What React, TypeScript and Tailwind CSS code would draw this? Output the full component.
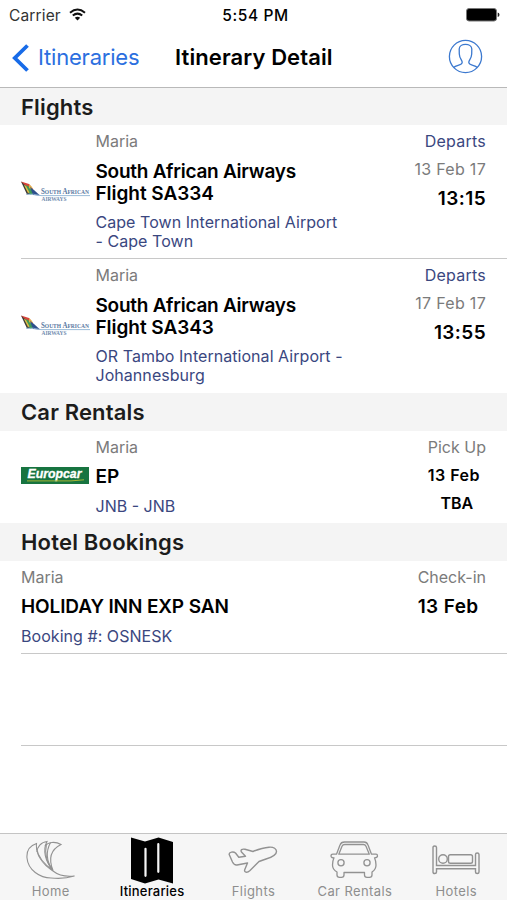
import React from 'react';

interface Flight {
  passenger: string;
  number: string;
  route: string[];
  date: string;
  time: string;
}

const flights: Flight[] = [
  {
    passenger: 'Maria',
    number: 'Flight SA334',
    route: ['Cape Town International Airport', '- Cape Town'],
    date: '13 Feb 17',
    time: '13:15',
  },
  {
    passenger: 'Maria',
    number: 'Flight SA343',
    route: ['OR Tambo International Airport -', 'Johannesburg'],
    date: '17 Feb 17',
    time: '13:55',
  },
];

const SouthAfricanLogo = () => (
  <svg width="69" height="22" viewBox="0 0 69 22">
    <path d="M0 0.5 L8 3 L12 8 L6 9 Z" fill="#d9443a" />
    <path d="M0 0.5 L6 13.5 L10 13 L5 5 Z" fill="#3f3b37" />
    <path d="M3 4 L7 5 L15 13 L9 13.5 Z" fill="#3d9a58" />
    <path d="M3 4 L5 5 L8.5 11.5 L7 12 Z" fill="#e3bd45" />
    <path d="M8 3 L11 6 L12.5 10 L8 7 Z" fill="#e0ad45" />
    <path d="M9 6 L13 9 L19 14.5 L12 14 Z" fill="#2e4f8c" />
    <path d="M5 13.2 Q12 12.6 20 14.6 H69" fill="none" stroke="#8fb4d4" strokeWidth="0.9" />
    <text x="20" y="13.2" textLength="48" lengthAdjust="spacingAndGlyphs" fontFamily="Liberation Serif, serif" fontWeight="700" fill="#58779f">
      <tspan fontSize="7.5">S</tspan><tspan fontSize="6">OUTH </tspan><tspan fontSize="7.5">A</tspan><tspan fontSize="6">FRICAN</tspan>
    </text>
    <text x="20.5" y="19.5" textLength="25" lengthAdjust="spacingAndGlyphs" fontFamily="Liberation Serif, serif" fontSize="6.3" fontWeight="700" fill="#6f8bae">AIRWAYS</text>
  </svg>
);

const EuropcarLogo = () => (
  <svg width="68" height="17" viewBox="0 0 68 17">
    <rect width="68" height="17" fill="#177440" />
    <text x="6.5" y="11" textLength="54" lengthAdjust="spacingAndGlyphs" fontFamily="Liberation Sans, sans-serif" fontSize="12" fontWeight="700" fontStyle="italic" fill="#fff" stroke="#fff" strokeWidth="0.3">Europcar</text>
    <path d="M6 13.9 H50 L63 12.8" fill="none" stroke="#a5b535" strokeWidth="1" />
  </svg>
);

const SectionHeader = ({ title, className }: { title: string; className: string }) => (
  <h2 className={`shrink-0 bg-[#f4f4f4] pl-[21px] text-[22px] leading-[38px] font-semibold text-[#1c1c1c] ${className}`}>{title}</h2>
);

const HomeIcon = () => (
  <svg width="50" height="40" viewBox="0 0 50 40" fill="none" stroke="#929292" strokeWidth="1.1">
    <path d="M10.5 3.5 C3 6 0.5 12 1 18 C2 30 14 38 25 38 C34 39 42 38 48.5 36 C40 37 32 35 27 31 C16 24 9.5 14 10.5 3.5 Z" />
    <path d="M11 12 C11 7 15 2 21 1.5 C16.5 10 19 21 27 30.5 C18 24 12 17 10.8 9" />
    <path d="M19 6 C22 2 29 1 35 4.5 C25 9.5 22 18 27 30.5 C20 22 18.5 13 20.5 4" />
    <path d="M24.5 2.5 C19.5 12 21 22 26.5 30" />
  </svg>
);

const MapIcon = () => (
  <svg width="44" height="48" viewBox="0 0 44 48">
    <path d="M1 1.5 L15 5.5 L28.5 1.5 L43 6 V47.5 L28.5 43.5 L15 47.5 L1 43 Z" fill="#000" />
    <path d="M15.5 12.8 V39.8 M28.3 8.2 V35.8" stroke="#f6f6f6" strokeWidth="2.2" strokeLinecap="round" />
  </svg>
);

const PlaneIcon = () => (
  <svg width="50" height="40" viewBox="0 0 50 40" fill="none" stroke="#929292" strokeWidth="1.4" strokeLinejoin="round">
    <path d="M1.2 14.5 C0.8 12 5.5 11.3 7.5 13 L10.8 17.2 L17.5 16.2 L13.7 12.3 C11.8 9.8 14.3 8.6 17 9.3 L25 11.5 C31 9 37 7.5 41 7.2 C46 6.8 48.5 9 48.5 11.5 C48.5 15.5 43 17.5 38 19 L31 21.5 L22 30.5 C19 33.3 15.7 32.5 16.8 29.5 L19.5 23 L9 25 C6.5 25.4 5.5 24 4.5 22 Z" />
  </svg>
);

const CarIcon = () => (
  <svg width="49" height="38" viewBox="0 0 49 38" fill="none" stroke="#929292" strokeWidth="1.3" strokeLinejoin="round">
    <path d="M6.5 13.2 L10 4 Q11 1 14.5 1 H34 Q37 1 38 4 L41.5 13.2 H46 Q47.5 13.2 47.5 15 Q47.5 16.8 44.5 16.8 Q46 20 46 24 Q46 28.5 42 31 V34 Q42 36.3 39.5 36.3 H37 Q34.5 36.3 34.5 34 V31.5 H14 V34 Q14 36.3 11.5 36.3 H9.5 Q7 36.3 7 34 V31 Q2.5 28.5 2.5 24 Q2.5 20 4 16.8 Q1 16.8 1 15 Q1 13.2 3 13.2 Z" />
    <path d="M8.8 13.2 L12 5.2 Q12.8 3.5 14.8 3.5 H33.4 Q35.2 3.5 36 5.2 L39.3 13.2 Z" />
    <circle cx="11" cy="21.7" r="3.1" />
    <circle cx="37" cy="21.7" r="3.1" />
  </svg>
);

const BedIcon = () => (
  <svg width="48" height="30" viewBox="0 0 48 30" fill="none" stroke="#929292" strokeWidth="1.4">
    <path d="M1 2.5 Q1 1 2.7 1 Q4.5 1 4.5 2.5 V20.5 H43.5 V9.5 Q43.5 8 45.2 8 Q47 8 47 9.5 V27 Q47 28.5 45.2 28.5 Q43.5 28.5 43.5 27 V23.8 H4.5 V27 Q4.5 28.5 2.7 28.5 Q1 28.5 1 27 Z" />
    <circle cx="11" cy="14" r="4.3" />
    <rect x="16.5" y="9.8" width="24" height="8.4" rx="1.8" />
  </svg>
);

const tabs = [
  { label: 'Home', icon: HomeIcon, active: false },
  { label: 'Itineraries', icon: MapIcon, active: true },
  { label: 'Flights', icon: PlaneIcon, active: false },
  { label: 'Car Rentals', icon: CarIcon, active: false },
  { label: 'Hotels', icon: BedIcon, active: false },
];

const App: React.FC = () => {
  return (
    <div className="flex h-[900px] w-[507px] flex-col overflow-hidden bg-white font-['Inter',sans-serif] text-[16px] leading-[19px] whitespace-nowrap text-black">
      {/* Status bar */}
      <div className="grid h-[30px] shrink-0 grid-cols-3 items-center pr-[7px] pl-[9px]">
        <div className="flex items-center gap-[8px]">
          <span className="text-[15.5px] tracking-[0.15px] text-[#333]">Carrier</span>
          <svg className="-mt-px" width="17" height="13" viewBox="0 0 17 13" fill="none" stroke="#111" strokeWidth="2">
            <path d="M1 4.7 Q8.5 -1.7 16 4.7" />
            <path d="M3.8 7.6 Q8.5 3.6 13.2 7.6" />
            <path d="M8.5 12.5 L5.8 9.7 Q8.5 7.7 11.2 9.7 Z" fill="#111" stroke="none" />
          </svg>
        </div>
        <div className="pl-[2px] text-center text-[15.5px] font-medium tracking-[0.6px]">5:54 PM</div>
        <div className="flex justify-end">
          <svg width="34" height="14" viewBox="0 0 34 14">
            <rect x="0.5" y="0.5" width="30" height="12.5" rx="2.5" fill="#000" stroke="#777" />
            <path d="M31.7 4.5 Q33.5 5 33.5 6.8 Q33.5 8.5 31.7 9 Z" fill="#222" />
          </svg>
        </div>
      </div>

      {/* Navigation bar */}
      <div className="flex h-[58px] shrink-0 items-center border-b border-[#b9b9b9] pr-[24px] pb-[2px] pl-[12px]">
        <div className="flex w-[163px] items-center gap-[9px] text-[22px] tracking-[-0.2px] text-[#2b6fdf]">
          <svg width="17" height="28" viewBox="0 0 17 28" fill="none" stroke="#176be8" strokeWidth="3.8">
            <path d="M15.5 1.5 L2.8 14 L15.5 26.5" />
          </svg>
          <span>Itineraries</span>
        </div>
        <h1 className="flex-1 text-[22px] font-semibold tracking-[0.1px]">Itinerary Detail</h1>
        <svg className="-mt-[3px]" width="35" height="35" viewBox="0 0 35 35" fill="none" stroke="#3c79cf" strokeWidth="1.3">
          <circle cx="17.5" cy="17.5" r="16.1" />
          <path d="M5.8 28.5 C8 26 14 26.5 14.2 23.5 C14.4 21 11.5 20 11.3 15 L11.2 10 C11.4 3.7 23.6 3.7 23.8 10 L23.7 15 C23.5 20 20.6 21 20.8 23.5 C21 26.5 27 26 29.2 28.5" />
        </svg>
      </div>

      {/* Flights */}
      <SectionHeader title="Flights" className="h-[37px] tracking-[0.15px]" />
      {flights.map((flight, index) => (
        <div key={index} className="pl-[21px]">
          <div className={`flex h-[134px] pt-[7px] pr-[21px] ${index === 0 ? 'border-b border-[#c8c8c8]' : ''}`}>
            <div className="w-[74.5px] pt-[49px]">
              <SouthAfricanLogo />
            </div>
            <div className="flex-1">
              <div className="text-[#7b7b7b]">{flight.passenger}</div>
              <div className="mt-[10px] text-[19px] leading-[22px] font-semibold">
                <div className="tracking-[-0.26px]">South African Airways</div>
                <div className="tracking-[-0.05px]">{flight.number}</div>
              </div>
              <div className="mt-[8px] tracking-[0.05px] text-[#3a477f]">
                {flight.route.map((line) => (
                  <div key={line}>{line}</div>
                ))}
              </div>
            </div>
            <div className="text-right">
              <div className="tracking-[0.25px] text-[#3a477f]">Departs</div>
              <div className="mt-[9px] tracking-[0.3px] text-[#7b7b7b]">{flight.date}</div>
              <div className="mt-[9px] text-[19px] leading-[22px] font-semibold tracking-[0.4px]">{flight.time}</div>
            </div>
          </div>
        </div>
      ))}

      {/* Car rentals */}
      <SectionHeader title="Car Rentals" className="h-[38px] tracking-[0.15px]" />
      <div className="flex h-[92px] pt-[7px] pr-[21px] pl-[21px]">
        <div className="w-[74.5px] pt-[29px]">
          <EuropcarLogo />
        </div>
        <div className="flex-1">
          <div className="text-[#7b7b7b]">Maria</div>
          <div className="mt-[9px] text-[19px] leading-[22px] font-semibold">EP</div>
          <div className="mt-[9px] text-[#3a477f]">JNB - JNB</div>
        </div>
        <div className="text-center">
          <div className="text-[#7b7b7b]">Pick Up</div>
          <div className="mt-[9px] pr-[6px] font-semibold tracking-[0.5px]">13 Feb</div>
          <div className="mt-[9px] font-semibold">TBA</div>
        </div>
      </div>

      {/* Hotel bookings */}
      <SectionHeader title="Hotel Bookings" className="h-[38px] tracking-[0.2px]" />
      <div className="ml-[21px] flex h-[93px] border-b border-[#c8c8c8] pt-[7px] pr-[21px]">
        <div className="flex-1">
          <div className="text-[#7b7b7b]">Maria</div>
          <div className="mt-[9px] text-[19px] leading-[22px] font-semibold tracking-[-0.12px]">HOLIDAY INN EXP SAN</div>
          <div className="mt-[9px] tracking-[0.05px] text-[#3a477f]">Booking #: OSNESK</div>
        </div>
        <div>
          <div className="text-[#7b7b7b]">Check-in</div>
          <div className="mt-[9px] text-[19px] leading-[22px] font-semibold tracking-[0.4px]">13 Feb</div>
        </div>
      </div>
      <div className="ml-[21px] h-[92px] border-b border-[#c8c8c8]" />

      {/* Tab bar */}
      <div className="mt-auto grid h-[67px] shrink-0 grid-cols-5 border-t border-[#c4c4c4] bg-[#f6f6f6]">
        {tabs.map((tab) => (
          <div key={tab.label} className="flex flex-col items-center">
            <div className="flex h-[49px] items-center justify-center pt-[2px]">
              <tab.icon />
            </div>
            <span className={`text-[13px] leading-[16px] ${tab.active ? 'font-medium tracking-[0.2px] text-black' : 'tracking-[0.4px] text-[#8e8e8e]'}`}>
              {tab.label}
            </span>
          </div>
        ))}
      </div>
    </div>
  );
};

export default App;
